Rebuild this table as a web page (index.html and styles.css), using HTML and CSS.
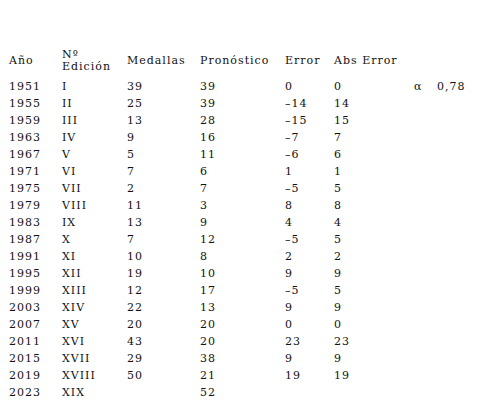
FILE: index.html
```html
<!DOCTYPE html>
<html lang="es">
<head>
<meta charset="utf-8">
<link rel="stylesheet" href="styles.css">
</head>
<body>
<table class="sheet">
  <colgroup>
    <col class="c1"><col class="c2"><col class="c3"><col class="c4"><col class="c5"><col class="c6"><col class="c7"><col class="c8">
  </colgroup>
  <thead>
    <tr class="head">
      <th>Año</th><th><span class="l">Nº</span><span class="l">Edición</span></th><th>Medallas</th><th>Pronóstico</th><th>Error</th><th>Abs Error</th><th></th><th></th>
    </tr>
  </thead>
  <tbody>
    <tr><td>1951</td><td>I</td><td>39</td><td>39</td><td>0</td><td>0</td><td>α</td><td>0,78</td></tr>
    <tr><td>1955</td><td>II</td><td>25</td><td>39</td><td>–14</td><td>14</td><td></td><td></td></tr>
    <tr><td>1959</td><td>III</td><td>13</td><td>28</td><td>–15</td><td>15</td><td></td><td></td></tr>
    <tr><td>1963</td><td>IV</td><td>9</td><td>16</td><td>–7</td><td>7</td><td></td><td></td></tr>
    <tr><td>1967</td><td>V</td><td>5</td><td>11</td><td>–6</td><td>6</td><td></td><td></td></tr>
    <tr><td>1971</td><td>VI</td><td>7</td><td>6</td><td>1</td><td>1</td><td></td><td></td></tr>
    <tr><td>1975</td><td>VII</td><td>2</td><td>7</td><td>–5</td><td>5</td><td></td><td></td></tr>
    <tr><td>1979</td><td>VIII</td><td>11</td><td>3</td><td>8</td><td>8</td><td></td><td></td></tr>
    <tr><td>1983</td><td>IX</td><td>13</td><td>9</td><td>4</td><td>4</td><td></td><td></td></tr>
    <tr><td>1987</td><td>X</td><td>7</td><td>12</td><td>–5</td><td>5</td><td></td><td></td></tr>
    <tr><td>1991</td><td>XI</td><td>10</td><td>8</td><td>2</td><td>2</td><td></td><td></td></tr>
    <tr><td>1995</td><td>XII</td><td>19</td><td>10</td><td>9</td><td>9</td><td></td><td></td></tr>
    <tr><td>1999</td><td>XIII</td><td>12</td><td>17</td><td>–5</td><td>5</td><td></td><td></td></tr>
    <tr><td>2003</td><td>XIV</td><td>22</td><td>13</td><td>9</td><td>9</td><td></td><td></td></tr>
    <tr><td>2007</td><td>XV</td><td>20</td><td>20</td><td>0</td><td>0</td><td></td><td></td></tr>
    <tr><td>2011</td><td>XVI</td><td>43</td><td>20</td><td>23</td><td>23</td><td></td><td></td></tr>
    <tr><td>2015</td><td>XVII</td><td>29</td><td>38</td><td>9</td><td>9</td><td></td><td></td></tr>
    <tr><td>2019</td><td>XVIII</td><td>50</td><td>21</td><td>19</td><td>19</td><td></td><td></td></tr>
    <tr><td>2023</td><td>XIX</td><td></td><td>52</td><td></td><td></td><td></td><td></td></tr>
  </tbody>
</table>
</body>
</html>
```

FILE: styles.css
```css
html, body {
  margin: 0;
  padding: 0;
  background: #ffffff;
}
body {
  padding: 43px 8px 0 8px;
  font-family: "DejaVu Serif", serif;
  font-size: 11px;
  letter-spacing: 1px;
  color: #111111;
}
.sheet {
  border-collapse: collapse;
  table-layout: fixed;
  width: 471px;
}
.c1 { width: 53px; }
.c2 { width: 65px; }
.c3 { width: 73px; }
.c4 { width: 85px; }
.c5 { width: 49px; }
.c6 { width: 80px; }
.c7 { width: 23px; }
.c8 { width: auto; }
.sheet th,
.sheet td {
  padding: 0 0 0 1px;
  text-align: left;
  font-weight: normal;
  white-space: nowrap;
}
.head th {
  height: 35px;
  line-height: 12px;
  vertical-align: middle;
}
.l {
  display: block;
  line-height: 12px;
}
.sheet td {
  height: 17px;
  line-height: 17px;
}
```
